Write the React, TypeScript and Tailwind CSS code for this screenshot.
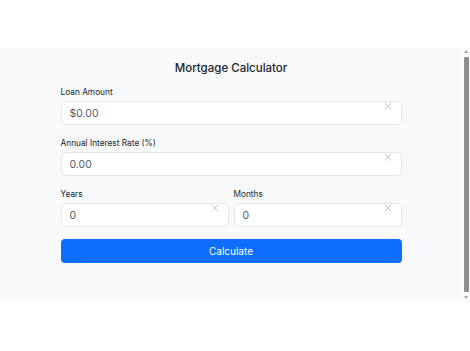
import { X } from "lucide-react";

const font = { fontFamily: "Inter, 'Noto Sans', sans-serif" };

function Field({ label, value }: { label: string; value: string }) {
  return (
    <div className="flex flex-col">
      <label className="text-[8.3px] leading-[12px] text-[#212529] mb-[3px]">{label}</label>
      <div className="relative">
        <input
          readOnly
          value={value}
          className="block w-full h-[24px] rounded-[5px] border border-[#e3e6ea] bg-white pl-[8px] pr-[24px] text-[10.5px] text-[#555b61] outline-none"
        />
        <button className="absolute right-[8px] top-[-1px] text-[#a2a7ad]">
          <X className="block w-[12px] h-[12px]" strokeWidth={1.2} />
        </button>
      </div>
    </div>
  );
}

function Scrollbar() {
  return (
    <div className="w-[8px] h-full bg-[#fbfbfb] flex flex-col items-center pt-[2px] pb-[3px]">
      <div className="w-0 h-0 border-x-[2.5px] border-x-transparent border-b-[3px] border-b-[#a3a3a3]" />
      <div className="mt-[4px] flex-1 w-[5px] rounded-[1px] bg-[#8f8f8f]" />
      <div className="mt-[4px] w-0 h-0 border-x-[2.5px] border-x-transparent border-t-[3px] border-t-[#a3a3a3]" />
    </div>
  );
}

export default function App() {
  return (
    <div className="w-[470px] h-[351px] bg-white pt-[48px]" style={font}>
      <div className="h-[254px] flex">
        <div className="flex-1 overflow-hidden bg-[#f8f9fa]">
          <div className="w-[341px] mx-auto pt-[10px]">
            <h1 className="text-center text-[11.5px] leading-[20px] font-medium text-[#212529]">
              Mortgage Calculator
            </h1>
            <div className="mt-[8px] flex flex-col gap-[12px]">
              <Field label="Loan Amount" value="$0.00" />
              <Field label="Annual Interest Rate (%)" value="0.00" />
              <div className="grid grid-cols-2 gap-[5px]">
                <Field label="Years" value="0" />
                <Field label="Months" value="0" />
              </div>
              <button className="block h-[24px] w-full rounded-[4px] bg-[#0d6efd] text-white text-[10px]">
                Calculate
              </button>
            </div>
          </div>
        </div>
        <Scrollbar />
      </div>
    </div>
  );
}
